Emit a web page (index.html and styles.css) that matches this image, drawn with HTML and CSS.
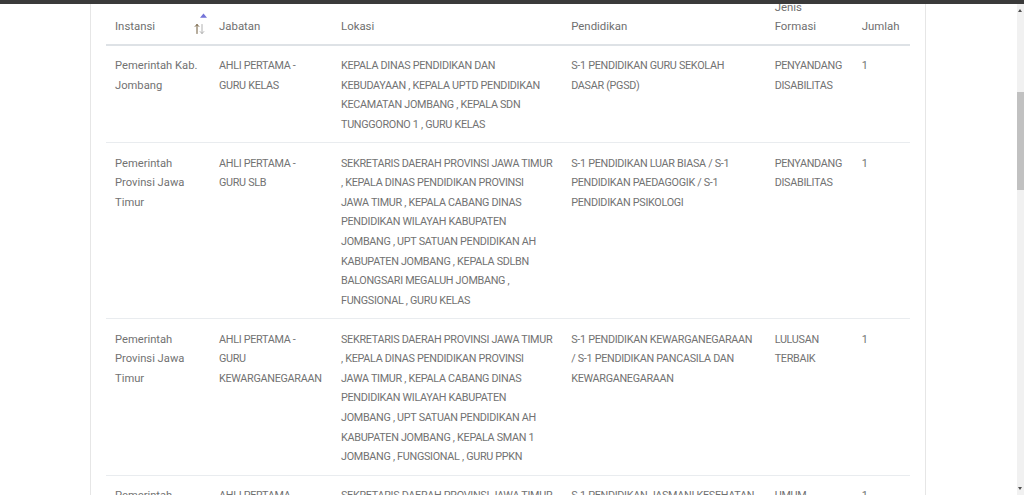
FILE: index.html
```html
<!DOCTYPE html>
<html lang="id">
<head>
<meta charset="utf-8">
<title>Formasi</title>
<link rel="stylesheet" href="styles.css">
</head>
<body>
<div class="topbar"></div>
<div class="main">
  <div class="content">
    <div class="card">
      <table class="tbl">
        <colgroup>
          <col class="c1"><col class="c2"><col class="c3"><col class="c4"><col class="c5"><col class="c6">
        </colgroup>
        <thead>
          <tr>
            <th class="sortable"><span>Instansi</span>
              <svg class="sort" width="14" height="24" viewBox="0 0 14 24">
                <polygon points="9.5,1.5 13,5.7 6,5.7" fill="#7474d8"/>
                <g stroke-width="1" fill="none" stroke-linecap="round" stroke-linejoin="round">
                  <path d="M3 12.5 V21.5 M1.2 14.4 L3 12.5 L4.8 14.4" stroke="#6f5a3a"/>
                  <path d="M8 12.5 V21.5 M6.2 19.6 L8 21.5 L9.8 19.6" stroke="#b0b0b0"/>
                </g>
              </svg>
            </th>
            <th>Jabatan</th>
            <th>Lokasi</th>
            <th>Pendidikan</th>
            <th>Jenis Formasi</th>
            <th>Jumlah</th>
          </tr>
        </thead>
        <tbody>
          <tr>
            <td>Pemerintah Kab. Jombang</td>
            <td>AHLI PERTAMA - GURU KELAS</td>
            <td>KEPALA DINAS PENDIDIKAN DAN KEBUDAYAAN , KEPALA UPTD PENDIDIKAN KECAMATAN JOMBANG , KEPALA SDN TUNGGORONO 1 , GURU KELAS</td>
            <td>S-1 PENDIDIKAN GURU SEKOLAH DASAR (PGSD)</td>
            <td>PENYANDANG DISABILITAS</td>
            <td>1</td>
          </tr>
          <tr>
            <td>Pemerintah Provinsi Jawa Timur</td>
            <td>AHLI PERTAMA - GURU SLB</td>
            <td>SEKRETARIS DAERAH PROVINSI JAWA TIMUR , KEPALA DINAS PENDIDIKAN PROVINSI JAWA TIMUR , KEPALA CABANG DINAS PENDIDIKAN WILAYAH KABUPATEN JOMBANG , UPT SATUAN PENDIDIKAN AH KABUPATEN JOMBANG , KEPALA SDLBN BALONGSARI MEGALUH JOMBANG , FUNGSIONAL , GURU KELAS</td>
            <td>S-1 PENDIDIKAN LUAR BIASA / S-1 PENDIDIKAN PAEDAGOGIK / S-1 PENDIDIKAN PSIKOLOGI</td>
            <td>PENYANDANG DISABILITAS</td>
            <td>1</td>
          </tr>
          <tr>
            <td>Pemerintah Provinsi Jawa Timur</td>
            <td>AHLI PERTAMA - GURU KEWARGANEGARAAN</td>
            <td>SEKRETARIS DAERAH PROVINSI JAWA TIMUR , KEPALA DINAS PENDIDIKAN PROVINSI JAWA TIMUR , KEPALA CABANG DINAS PENDIDIKAN WILAYAH KABUPATEN JOMBANG , UPT SATUAN PENDIDIKAN AH KABUPATEN JOMBANG , KEPALA SMAN 1 JOMBANG , FUNGSIONAL , GURU PPKN</td>
            <td>S-1 PENDIDIKAN KEWARGANEGARAAN / S-1 PENDIDIKAN PANCASILA DAN KEWARGANEGARAAN</td>
            <td>LULUSAN TERBAIK</td>
            <td>1</td>
          </tr>
          <tr>
            <td>Pemerintah Provinsi Jawa Timur</td>
            <td>AHLI PERTAMA - GURU PENDIDIKAN JASMANI</td>
            <td>SEKRETARIS DAERAH PROVINSI JAWA TIMUR , KEPALA DINAS PENDIDIKAN PROVINSI JAWA TIMUR , KEPALA CABANG DINAS PENDIDIKAN WILAYAH KABUPATEN JOMBANG</td>
            <td>S-1 PENDIDIKAN JASMANI KESEHATAN DAN REKREASI</td>
            <td>UMUM</td>
            <td>1</td>
          </tr>
        </tbody>
      </table>
    </div>
  </div>
  <div class="scrollbar">
    <div class="sb-arrow up"></div>
    <div class="sb-track">
      <div class="sb-thumb"></div>
    </div>
    <div class="sb-arrow down"></div>
  </div>
</div>
</body>
</html>
```
FILE: styles.css
```css
html, body {
  margin: 0;
  padding: 0;
  height: 100%;
  overflow: hidden;
  background: #ffffff;
}
body {
  display: flex;
  flex-direction: column;
  font-family: Roboto, "Liberation Sans", sans-serif;
  font-size: 11.2px;
  color: #727272;
}
.topbar {
  height: 4px;
  background: #3a3a3a;
  flex: none;
}
.main {
  flex: 1;
  display: flex;
  min-height: 0;
}
.content {
  flex: 1;
  padding: 0 91px 0 90px;
  overflow: hidden;
}
.card {
  height: 100%;
  border-left: 1px solid #e6e6e6;
  border-right: 1px solid #e6e6e6;
  padding: 0 15px;
  box-sizing: border-box;
  overflow: hidden;
}
.tbl {
  width: 804px;
  border-collapse: collapse;
  table-layout: fixed;
  margin-top: -17.2px;
}
.c1 { width: 104px; }
.c2 { width: 122px; }
.c3 { width: 230.2px; }
.c4 { width: 203.5px; }
.c5 { width: 87px; }
.c6 { width: 57.3px; }
.tbl th {
  text-align: left;
  font-weight: 400;
  vertical-align: bottom;
  padding: 10.8px 9px 7px 9px;
  line-height: 19.6px;
  border-bottom: 2px solid #dee2e6;
  color: #6f6f6f;
  font-size: 11.4px;
}
.tbl th.sortable {
  position: relative;
}
.sort {
  position: absolute;
  right: 2px;
  bottom: 8px;
}
.tbl td {
  vertical-align: top;
  padding: 10.2px 9px 8.1px 9px;
  line-height: 19.6px;
  border-top: 1px solid #e9ecef;
  font-size: 10.8px;
  letter-spacing: -0.3px;
}
.tbl td:first-child {
  font-size: 11.2px;
  letter-spacing: 0;
}
.tbl tbody tr:first-child td {
  border-top: none;
}
.scrollbar {
  width: 7px;
  flex: none;
  display: flex;
  flex-direction: column;
  background: #f1f1f1;
}
.sb-arrow {
  height: 14px;
  flex: none;
  position: relative;
}
.sb-arrow::after {
  content: "";
  position: absolute;
  left: 1px;
  border-left: 2.5px solid transparent;
  border-right: 2.5px solid transparent;
}
.sb-arrow.up::after {
  top: 5px;
  border-bottom: 3px solid #505050;
}
.sb-arrow.down::after {
  bottom: 5px;
  border-top: 3px solid #505050;
}
.sb-track {
  flex: 1;
  padding-top: 74px;
}
.sb-thumb {
  height: 98px;
  background: #c1c1c1;
}
```
